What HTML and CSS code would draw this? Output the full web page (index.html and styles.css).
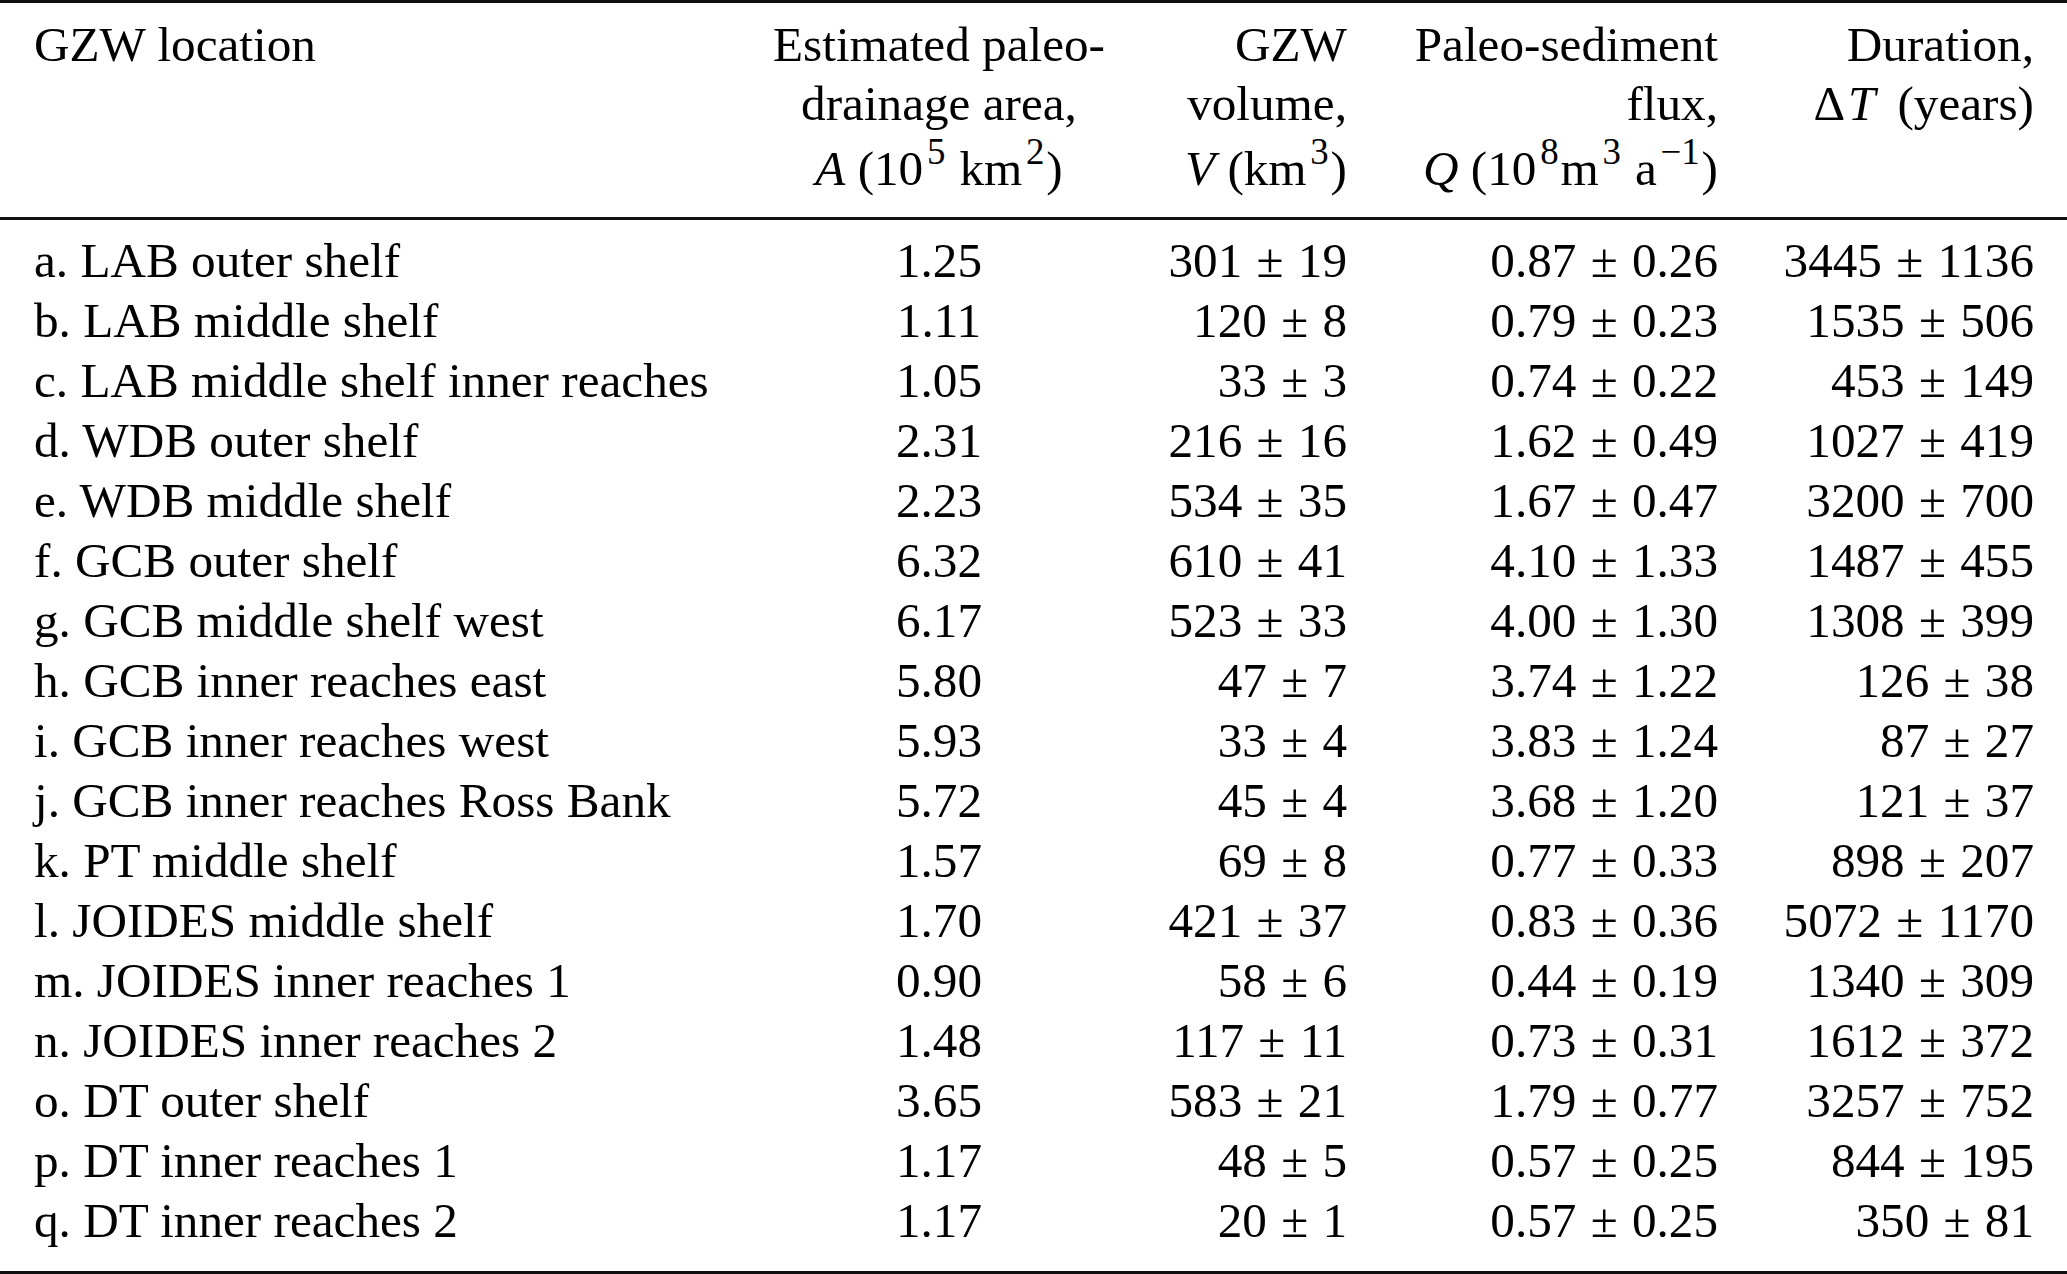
FILE: index.html
```html
<!DOCTYPE html>
<html lang="en">
<head>
<meta charset="utf-8">
<title>GZW table</title>
<link rel="stylesheet" href="styles.css">
</head>
<body>
<table class="gzw">
  <colgroup>
    <col class="c1"><col class="c2"><col class="c3"><col class="c4"><col class="c5">
  </colgroup>
  <thead>
    <tr>
      <th class="loc"><div class="ln">GZW location</div></th>
      <th class="ctr">
        <div class="ln">Estimated paleo-</div>
        <div class="ln">drainage area,</div>
        <div class="ln ln3"><i>A</i> (10<sup>5</sup> km<sup>2</sup>)</div>
      </th>
      <th class="num n3">
        <div class="ln">GZW</div>
        <div class="ln">volume,</div>
        <div class="ln ln3"><i>V</i> (km<sup>3</sup>)</div>
      </th>
      <th class="num n4">
        <div class="ln">Paleo-sediment</div>
        <div class="ln">flux,</div>
        <div class="ln ln3"><i>Q</i> (10<sup>8</sup>m<sup>3</sup> a<sup>−1</sup>)</div>
      </th>
      <th class="num n5">
        <div class="ln">Duration,</div>
        <div class="ln">Δ<i class="dt">T</i> (years)</div>
      </th>
    </tr>
  </thead>
  <tbody>
    <tr><td class="loc">a. LAB outer shelf</td><td class="ctr">1.25</td><td class="num n3">301<span class="pm">±</span>19</td><td class="num n4">0.87<span class="pm">±</span>0.26</td><td class="num n5">3445<span class="pm">±</span>1136</td></tr>
    <tr><td class="loc">b. LAB middle shelf</td><td class="ctr">1.11</td><td class="num n3">120<span class="pm">±</span>8</td><td class="num n4">0.79<span class="pm">±</span>0.23</td><td class="num n5">1535<span class="pm">±</span>506</td></tr>
    <tr><td class="loc">c. LAB middle shelf inner reaches</td><td class="ctr">1.05</td><td class="num n3">33<span class="pm">±</span>3</td><td class="num n4">0.74<span class="pm">±</span>0.22</td><td class="num n5">453<span class="pm">±</span>149</td></tr>
    <tr><td class="loc">d. WDB outer shelf</td><td class="ctr">2.31</td><td class="num n3">216<span class="pm">±</span>16</td><td class="num n4">1.62<span class="pm">±</span>0.49</td><td class="num n5">1027<span class="pm">±</span>419</td></tr>
    <tr><td class="loc">e. WDB middle shelf</td><td class="ctr">2.23</td><td class="num n3">534<span class="pm">±</span>35</td><td class="num n4">1.67<span class="pm">±</span>0.47</td><td class="num n5">3200<span class="pm">±</span>700</td></tr>
    <tr><td class="loc">f. GCB outer shelf</td><td class="ctr">6.32</td><td class="num n3">610<span class="pm">±</span>41</td><td class="num n4">4.10<span class="pm">±</span>1.33</td><td class="num n5">1487<span class="pm">±</span>455</td></tr>
    <tr><td class="loc">g. GCB middle shelf west</td><td class="ctr">6.17</td><td class="num n3">523<span class="pm">±</span>33</td><td class="num n4">4.00<span class="pm">±</span>1.30</td><td class="num n5">1308<span class="pm">±</span>399</td></tr>
    <tr><td class="loc">h. GCB inner reaches east</td><td class="ctr">5.80</td><td class="num n3">47<span class="pm">±</span>7</td><td class="num n4">3.74<span class="pm">±</span>1.22</td><td class="num n5">126<span class="pm">±</span>38</td></tr>
    <tr><td class="loc">i. GCB inner reaches west</td><td class="ctr">5.93</td><td class="num n3">33<span class="pm">±</span>4</td><td class="num n4">3.83<span class="pm">±</span>1.24</td><td class="num n5">87<span class="pm">±</span>27</td></tr>
    <tr><td class="loc">j. GCB inner reaches Ross Bank</td><td class="ctr">5.72</td><td class="num n3">45<span class="pm">±</span>4</td><td class="num n4">3.68<span class="pm">±</span>1.20</td><td class="num n5">121<span class="pm">±</span>37</td></tr>
    <tr><td class="loc">k. PT middle shelf</td><td class="ctr">1.57</td><td class="num n3">69<span class="pm">±</span>8</td><td class="num n4">0.77<span class="pm">±</span>0.33</td><td class="num n5">898<span class="pm">±</span>207</td></tr>
    <tr><td class="loc">l. JOIDES middle shelf</td><td class="ctr">1.70</td><td class="num n3">421<span class="pm">±</span>37</td><td class="num n4">0.83<span class="pm">±</span>0.36</td><td class="num n5">5072<span class="pm">±</span>1170</td></tr>
    <tr><td class="loc">m. JOIDES inner reaches 1</td><td class="ctr">0.90</td><td class="num n3">58<span class="pm">±</span>6</td><td class="num n4">0.44<span class="pm">±</span>0.19</td><td class="num n5">1340<span class="pm">±</span>309</td></tr>
    <tr><td class="loc">n. JOIDES inner reaches 2</td><td class="ctr">1.48</td><td class="num n3">117<span class="pm">±</span>11</td><td class="num n4">0.73<span class="pm">±</span>0.31</td><td class="num n5">1612<span class="pm">±</span>372</td></tr>
    <tr><td class="loc">o. DT outer shelf</td><td class="ctr">3.65</td><td class="num n3">583<span class="pm">±</span>21</td><td class="num n4">1.79<span class="pm">±</span>0.77</td><td class="num n5">3257<span class="pm">±</span>752</td></tr>
    <tr><td class="loc">p. DT inner reaches 1</td><td class="ctr">1.17</td><td class="num n3">48<span class="pm">±</span>5</td><td class="num n4">0.57<span class="pm">±</span>0.25</td><td class="num n5">844<span class="pm">±</span>195</td></tr>
    <tr><td class="loc">q. DT inner reaches 2</td><td class="ctr">1.17</td><td class="num n3">20<span class="pm">±</span>1</td><td class="num n4">0.57<span class="pm">±</span>0.25</td><td class="num n5">350<span class="pm">±</span>81</td></tr>
  </tbody>
</table>
</body>
</html>
```

FILE: styles.css
```css
html, body {
  margin: 0;
  padding: 0;
  background: #ffffff;
  overflow: hidden;
}

.gzw {
  width: 2067px;
  table-layout: fixed;
  border-collapse: separate;
  border-spacing: 0;
  border-top: 3px solid #111;
  border-bottom: 3px solid #111;
  font-family: "Liberation Serif", "Times New Roman", serif;
  font-size: 49.2px;
  color: #000;
}

.c1 { width: 745px; }
.c2 { width: 388px; }
.c3 { width: 243px; }
.c4 { width: 372px; }
.c5 { width: 319px; }

.gzw th,
.gzw td {
  padding: 0;
  font-weight: normal;
  white-space: nowrap;
}

.gzw th {
  vertical-align: top;
  padding-top: 12px;
  padding-bottom: 19px;
  border-bottom: 3px solid #111;
  line-height: 59px;
}

.ln {
  height: 59px;
}

.ln3 {
  margin-top: 6px;
}

.gzw td {
  line-height: 60px;
  vertical-align: baseline;
}

.gzw tbody tr:first-child td {
  padding-top: 11px;
}

.gzw tbody tr:last-child td {
  padding-bottom: 20px;
}

.loc {
  text-align: left;
  padding-left: 34px !important;
}

.ctr {
  text-align: center;
}

.num {
  text-align: right;
}

.n3 { padding-right: 29px !important; }
.n4 { padding-right: 30px !important; }
.n5 { padding-right: 33px !important; }

.pm {
  margin: 0 0.29em;
}

i {
  font-style: italic;
}

.dt {
  margin-left: 0.06em;
  margin-right: 0.2em;
}

sup {
  font-size: 0.75em;
  line-height: 0;
  vertical-align: baseline;
  position: relative;
  top: -0.58em;
  margin-left: 0.1em;
  margin-right: 0.05em;
}
```
